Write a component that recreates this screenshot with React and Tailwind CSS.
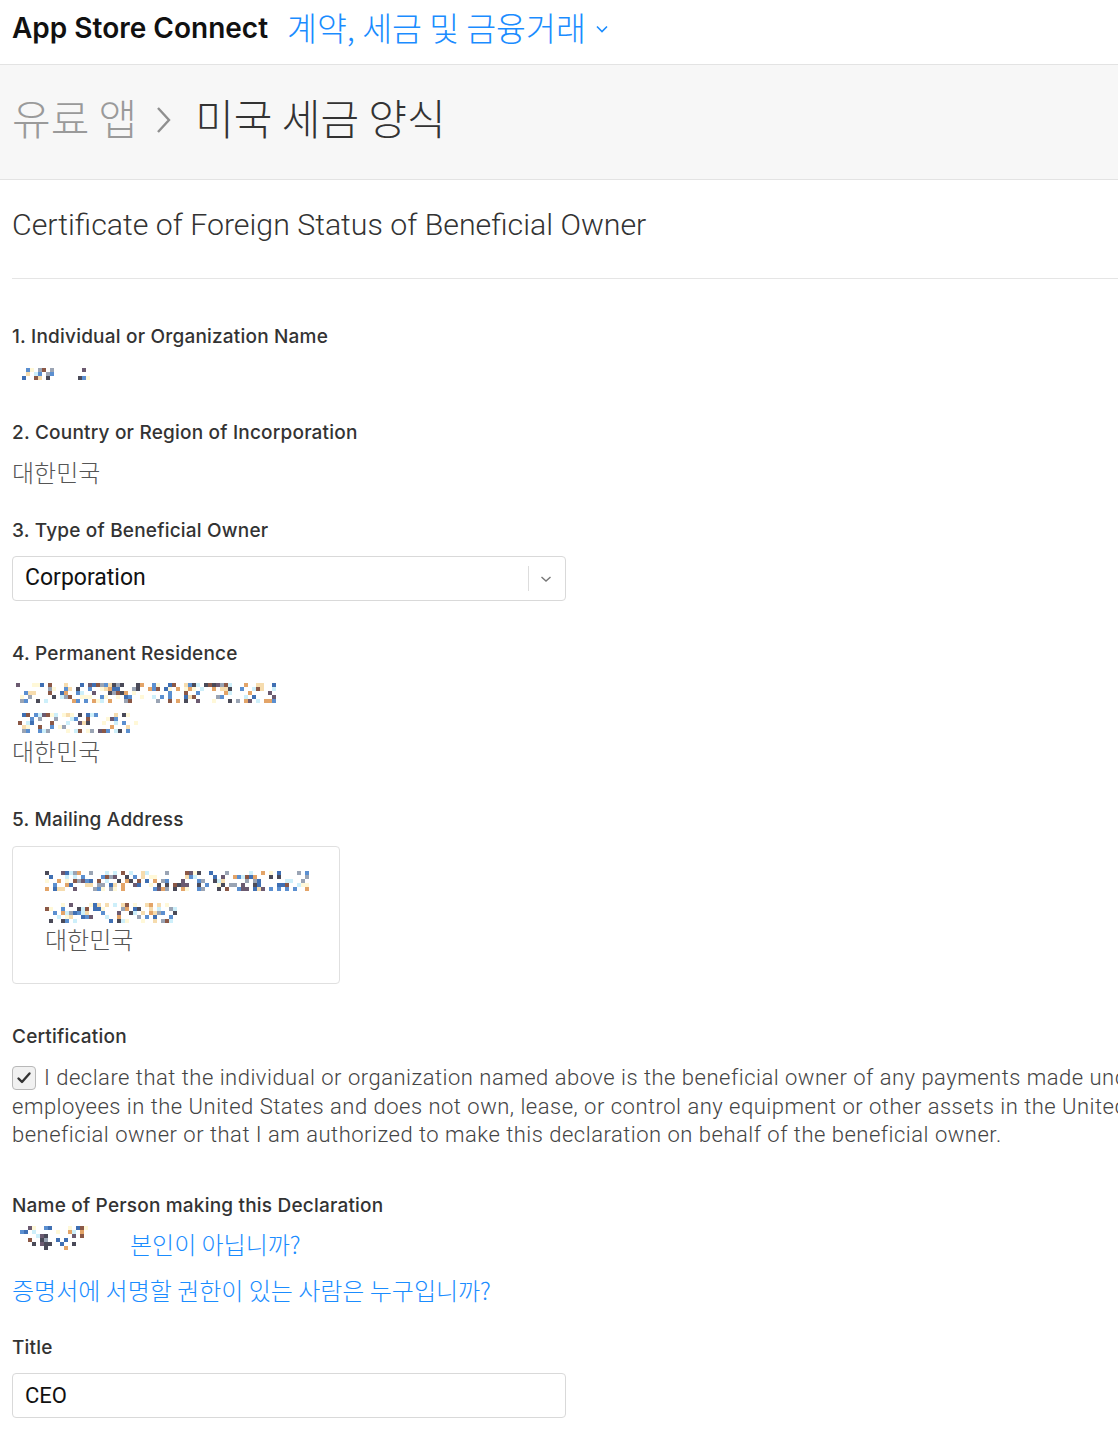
import React from "react";

const KR = '"Noto Sans CJK KR", Roboto, sans-serif';

// palette of the pixelated (redacted) text in the screenshot
const palette = ["#4a4a58", "#3f6fb3", "#e3a468", "#f6dcae", "#cdeffa", "#8b5846", "#fff8d8", "#5b8fd0", "#9aa4b4", "#6b5a70"];

function Mosaic({ cols, rows, seed, density = 0.5, cell = 4 }) {
  let s = seed;
  const rnd = () => {
    s = (s * 9301 + 49297) % 233280;
    return s / 233280;
  };
  const rects = [];
  for (let c = 0; c < cols; c++) {
    for (let r = 0; r < rows; r++) {
      if (rnd() < density) {
        rects.push(
          <rect key={c + "-" + r} x={c * cell} y={r * cell} width={cell} height={cell} fill={palette[Math.floor(rnd() * palette.length)]} />
        );
      }
    }
  }
  return (
    <svg width={cols * cell} height={rows * cell} className="block">
      {rects}
    </svg>
  );
}

function Label({ children, className = "" }) {
  return (
    <div className={`h-6 text-[19px] leading-6 font-medium text-[#333] tracking-[0.2px] ${className}`} style={{ fontFamily: "Inter, sans-serif" }}>
      {children}
    </div>
  );
}

function Korea({ className = "" }) {
  return (
    <div className={`h-[30px] text-[24px] leading-[30px] font-light text-[#555] ${className}`} style={{ fontFamily: KR }}>
      대한민국
    </div>
  );
}

export default function App() {
  return (
    <div className="w-full overflow-hidden bg-white" style={{ fontFamily: "Roboto, sans-serif" }}>
      {/* top bar */}
      <div className="h-[65px] flex items-center px-3 pb-[9px] border-b border-[#e3e3e3]">
        <span className="text-[28px] font-semibold text-[#111]" style={{ fontFamily: "Inter, sans-serif" }}>
          App Store Connect
        </span>
        <span className="ml-[19px] text-[32.5px] font-light text-[#1a8cff] flex items-center" style={{ fontFamily: KR }}>
          계약, 세금 및 금융거래
          <svg width="14" height="10" viewBox="0 0 14 10" className="ml-[9px] mt-[2px]">
            <path d="M2 2.5 L7 7.5 L12 2.5" fill="none" stroke="#1a8cff" strokeWidth="1.6" />
          </svg>
        </span>
      </div>

      {/* breadcrumb band */}
      <div className="h-[115px] flex items-center px-3 pb-[12px] bg-[#f7f7f7] border-b border-[#e3e3e3]" style={{ fontFamily: KR }}>
        <span className="text-[42px] font-light text-[#9a9a9a]">유료 앱</span>
        <svg width="20" height="30" viewBox="0 0 20 30" className="ml-[17px] mr-[21px] mt-[8px]">
          <path d="M4 3 L15 15 L4 27" fill="none" stroke="#8f8f8f" strokeWidth="2.4" />
        </svg>
        <span className="text-[42px] font-light text-[#333]">미국 세금 양식</span>
      </div>

      {/* form */}
      <div className="pl-3">
        <h1 className="mt-[27px] h-9 text-[30.3px] leading-9 font-light text-[#333]">
          Certificate of Foreign Status of Beneficial Owner
        </h1>
        <div className="mt-[35px] h-px bg-[#e5e5e5]" />

        <Label className="mt-[46px]">1. Individual or Organization Name</Label>
        <div className="mt-[19px] ml-[10px] flex gap-[20px]">
          <Mosaic cols={8} rows={3} seed={11} density={0.45} />
          <Mosaic cols={4} rows={3} seed={5} density={0.4} />
        </div>

        <Label className="mt-[41px]">2. Country or Region of Incorporation</Label>
        <Korea className="mt-3" />

        <Label className="mt-8">3. Type of Beneficial Owner</Label>
        <div className="mt-[13px] w-[554px] h-[45px] border border-[#d9d9d9] rounded-[4px] flex items-center pl-3 pr-3">
          <span className="flex-1 text-[23px] text-[#111]">Corporation</span>
          <div className="w-px h-[25px] bg-[#dddddd]" />
          <svg width="12" height="8" viewBox="0 0 12 8" className="ml-[11px] mr-[1px]">
            <path d="M1.5 2 L6 6 L10.5 2" fill="none" stroke="#777" strokeWidth="1.4" />
          </svg>
        </div>

        <Label className="mt-[41px]">4. Permanent Residence</Label>
        <div className="mt-[17px] ml-1">
          <Mosaic cols={65} rows={5} seed={23} density={0.42} />
        </div>
        <div className="mt-[10px] ml-[6px]">
          <Mosaic cols={31} rows={5} seed={41} density={0.45} />
        </div>
        <Korea className="mt-[3px]" />

        <Label className="mt-[42px]">5. Mailing Address</Label>
        <div className="mt-[14px] w-[328px] h-[138px] border border-[#e0e0e0] rounded-[4px] pl-8 pt-6">
          <Mosaic cols={66} rows={5} seed={77} density={0.45} />
          <div className="mt-[12px]">
            <Mosaic cols={33} rows={5} seed={93} density={0.45} />
          </div>
          <Korea className="mt-[1px]" />
        </div>

        <Label className="mt-[41px]">Certification</Label>
        <div className="mt-[15px] text-[22px] leading-[28.5px] font-light text-[#444] tracking-[0.5px] whitespace-nowrap">
          <div className="flex items-center">
            <span className="shrink-0 w-[24px] h-[24px] rounded-[4px] border border-[#b8b8b8] bg-[#f1f1f1] flex items-center justify-center mr-[8px]">
              <svg width="16" height="14" viewBox="0 0 16 14">
                <path d="M2.5 7.5 L6 11 L13.5 2.5" fill="none" stroke="#333" strokeWidth="2.4" strokeLinecap="round" strokeLinejoin="round" />
              </svg>
            </span>
            <span>I declare that the individual or organization named above is the beneficial owner of any payments made under this agreement, does not have any</span>
          </div>
          <div>employees in the United States and does not own, lease, or control any equipment or other assets in the United States, and that I am either the</div>
          <div>beneficial owner or that I am authorized to make this declaration on behalf of the beneficial owner.</div>
        </div>

        <Label className="mt-[44px]">Name of Person making this Declaration</Label>
        <div className="mt-2 flex items-start">
          <div className="ml-2 w-[110px]">
            <Mosaic cols={17} rows={6} seed={131} density={0.35} />
          </div>
          <span className="mt-[3px] leading-[30px] text-[24px] font-light text-[#1a8cff]" style={{ fontFamily: KR }}>
            본인이 아닙니까?
          </span>
        </div>
        <div className="mt-4 h-[30px] leading-[30px] text-[24px] font-light text-[#1a8cff]" style={{ fontFamily: KR }}>
          증명서에 서명할 권한이 있는 사람은 누구입니까?
        </div>

        <Label className="mt-[31px]">Title</Label>
        <div className="mt-[13px] w-[554px] h-[45px] border border-[#d9d9d9] rounded-[4px] flex items-center pl-3">
          <span className="text-[22px] text-[#111]">CEO</span>
        </div>
        <div className="h-6" />
      </div>
    </div>
  );
}
